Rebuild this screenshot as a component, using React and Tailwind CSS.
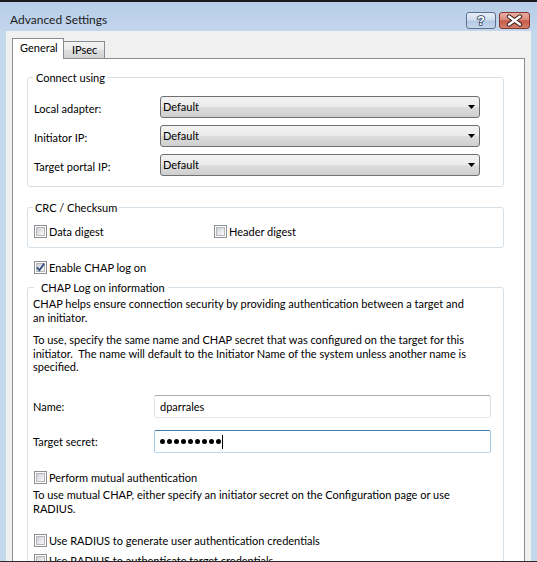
import React from "react";

function Checkbox({ checked }) {
  return (
    <div className="relative w-[13px] h-[13px] shrink-0 border border-[#8f8f8f] bg-white p-px">
      <div className="w-full h-full border border-[#b4b8bd] bg-[linear-gradient(135deg,#cdd0d5_0%,#e6e8ea_55%,#f8f8f8_100%)]" />
      {checked && (
        <svg className="absolute left-0 top-0" width="11" height="11" viewBox="0 0 11 11">
          <path d="M2 5.3 L4.4 8.3 L9.2 1.6" fill="none" stroke="#3a5488" strokeWidth="1.9" />
        </svg>
      )}
    </div>
  );
}

function CheckRow({ checked, label }) {
  return (
    <div className="flex items-center h-[15px]">
      <Checkbox checked={checked} />
      <span className="ml-[2px] whitespace-nowrap">{label}</span>
    </div>
  );
}

function Select() {
  return (
    <div className="w-[320px] h-[22px] rounded-[3px] border border-[#707070] bg-[linear-gradient(180deg,#f3f3f3_0%,#ebebeb_48%,#dddddd_50%,#cfcfcf_100%)] flex items-center pl-[2px] pr-[4px] pb-px">
      <span>Default</span>
      <svg className="ml-auto" width="7" height="4" viewBox="0 0 7 4">
        <path d="M0 0H7L3.5 4Z" fill="#000" />
      </svg>
    </div>
  );
}

function SelectRow({ label }) {
  return (
    <div className="flex items-center h-[22px]">
      <span className="w-[126px] pt-[3px] whitespace-nowrap">{label}</span>
      <Select />
    </div>
  );
}

export default function App() {
  return (
    <div className="w-[537px] h-[562px] overflow-hidden flex flex-col bg-[#c3d7ed] text-[11px] leading-[15px] text-black font-['Lato','Liberation_Sans',sans-serif]">
      <div className="h-[2px] shrink-0 bg-[#1a1a1a]" />
      {/* Title bar */}
      <div className="h-[29px] shrink-0 flex bg-[linear-gradient(180deg,#b7cee8_0%,#c2d6ec_100%)]">
        <div className="pl-[10px] pt-[10px] text-[12px] text-[#1b1b1b]">Advanced Settings</div>
        <div className="ml-auto mr-[7px] mt-[10px] flex gap-[3px]">
          <div className="w-[30px] h-[17px] rounded-[3px] border border-[#5d708f] bg-[linear-gradient(180deg,#e7eef8_0%,#cfdcee_48%,#b3c8e3_52%,#c4d6ec_100%)] flex items-center justify-center">
            <svg width="28" height="15" viewBox="0 0 28 15">
              <text x="14" y="12" textAnchor="middle" fontSize="13" fontWeight="bold" fontFamily="Liberation Sans, sans-serif" fill="#ffffff" stroke="#2d3e5c" strokeWidth="1.6" paintOrder="stroke">?</text>
            </svg>
          </div>
          <div className="w-[31px] h-[17px] rounded-[3px] border border-[#86342c] bg-[linear-gradient(180deg,#eab0a4_0%,#da8a7e_45%,#c75a47_52%,#d2826e_100%)] flex items-center justify-center">
            <svg width="29" height="15" viewBox="0 0 29 15">
              <path d="M9 3.5 L20 11.5 M20 3.5 L9 11.5" stroke="#3b1a18" strokeWidth="4.4" strokeLinecap="round" fill="none" />
              <path d="M9 3.5 L20 11.5 M20 3.5 L9 11.5" stroke="#ffffff" strokeWidth="2.4" strokeLinecap="round" fill="none" />
            </svg>
          </div>
        </div>
      </div>
      {/* Body */}
      <div className="flex-1 min-h-0 flex overflow-hidden">
        <div className="w-[6px] shrink-0" />
        <div className="w-[525px] shrink-0 bg-[#f0f0f0] pl-[6px] pt-[7px] flex flex-col min-h-0">
          {/* Tabs */}
          <div className="h-[20px] shrink-0 flex items-end relative z-10">
            <div className="w-[52px] h-[21px] -mb-px border border-b-0 border-[#898c95] bg-white pl-[7px] pt-[1px]">General</div>
            <div className="w-[42px] h-[17px] -ml-px border border-b-0 border-[#898c95] bg-[linear-gradient(180deg,#f3f3f3_0%,#ebebeb_48%,#dddddd_52%,#d3d3d3_100%)] pl-[8px]">IPsec</div>
          </div>
          {/* Page */}
          <div className="w-[513px] flex-1 min-h-0 overflow-hidden border border-b-0 border-[#898c95] bg-white pl-[14px] pt-[11px]">
            {/* Connect using */}
            <fieldset className="w-[477px] border border-[#d5dfe5] rounded-[3px] pt-[11px] pb-[10px]">
              <legend className="ml-[5px] px-[3px] leading-[15px]">Connect using</legend>
              <div className="pl-[6px] flex flex-col gap-[7px]">
                <SelectRow label="Local adapter:" />
                <SelectRow label="Initiator IP:" />
                <SelectRow label="Target portal IP:" />
              </div>
            </fieldset>
            {/* CRC */}
            <fieldset className="mt-[13px] w-[477px] border border-[#d5dfe5] rounded-[3px] pt-[9px] pb-[8px]">
              <legend className="ml-[5px] px-[2px] leading-[15px]">CRC / Checksum</legend>
              <div className="pl-[6px] flex">
                <div className="w-[180px]">
                  <CheckRow label="Data digest" />
                </div>
                <CheckRow label="Header digest" />
              </div>
            </fieldset>
            {/* Enable CHAP */}
            <div className="mt-[12px] ml-[7px]">
              <CheckRow checked label="Enable CHAP log on" />
            </div>
            {/* CHAP Log on information */}
            <fieldset className="mt-[5px] w-[477px] h-[400px] border border-[#d5dfe5] rounded-[3px] pt-[2px]">
              <legend className="ml-[6px] pl-[7px] pr-[3px] leading-[15px]">CHAP Log on information</legend>
              <div className="pl-[5px]">
                <div className="leading-[13.5px] whitespace-nowrap">
                  <div>CHAP helps ensure connection security by providing authentication between a target and</div>
                  <div>an initiator.</div>
                </div>
                <div className="mt-[9px] leading-[13.5px] whitespace-nowrap">
                  <div>To use, specify the same name and CHAP secret that was configured on the target for this</div>
                  <div>initiator.&nbsp; The name will default to the Initiator Name of the system unless another name is</div>
                  <div>specified.</div>
                </div>
                <div className="mt-[21.5px] flex items-center h-[23px]">
                  <span className="w-[121px]">Name:</span>
                  <div className="w-[337px] h-[23px] rounded-[2px] border border-[#e3e9ef] border-t-[#abadb3] border-l-[#e2e3ea] border-r-[#dbdfe6] bg-white flex items-center pl-[5px]">
                    dparrales
                  </div>
                </div>
                <div className="mt-[12px] flex items-center h-[23px]">
                  <span className="w-[121px]">Target secret:</span>
                  <div className="w-[337px] h-[23px] rounded-[2px] border border-[#b7d9ed] border-t-[#3d7bad] border-l-[#a4c9e3] border-r-[#a4c9e3] bg-white flex items-center pl-[5px]">
                    <div className="flex gap-[2px]">
                      {[0, 1, 2, 3, 4, 5, 6, 7, 8].map((i) => (
                        <div key={i} className="w-[5px] h-[5px] rounded-full bg-black" />
                      ))}
                    </div>
                    <div className="ml-[1px] w-px h-[14px] bg-black" />
                  </div>
                </div>
                <div className="mt-[17px] ml-px">
                  <CheckRow label="Perform mutual authentication" />
                </div>
                <div className="mt-[3px] leading-[13.5px] whitespace-nowrap">
                  <div>To use mutual CHAP, either specify an initiator secret on the Configuration page or use</div>
                  <div>RADIUS.</div>
                </div>
                <div className="mt-[17.5px] ml-px">
                  <CheckRow label="Use RADIUS to generate user authentication credentials" />
                </div>
                <div className="mt-[5px] ml-px">
                  <CheckRow label="Use RADIUS to authenticate target credentials" />
                </div>
              </div>
            </fieldset>
          </div>
        </div>
        <div className="flex-1" />
      </div>
      <div className="h-px shrink-0 bg-[#2b2b2b]" />
    </div>
  );
}
